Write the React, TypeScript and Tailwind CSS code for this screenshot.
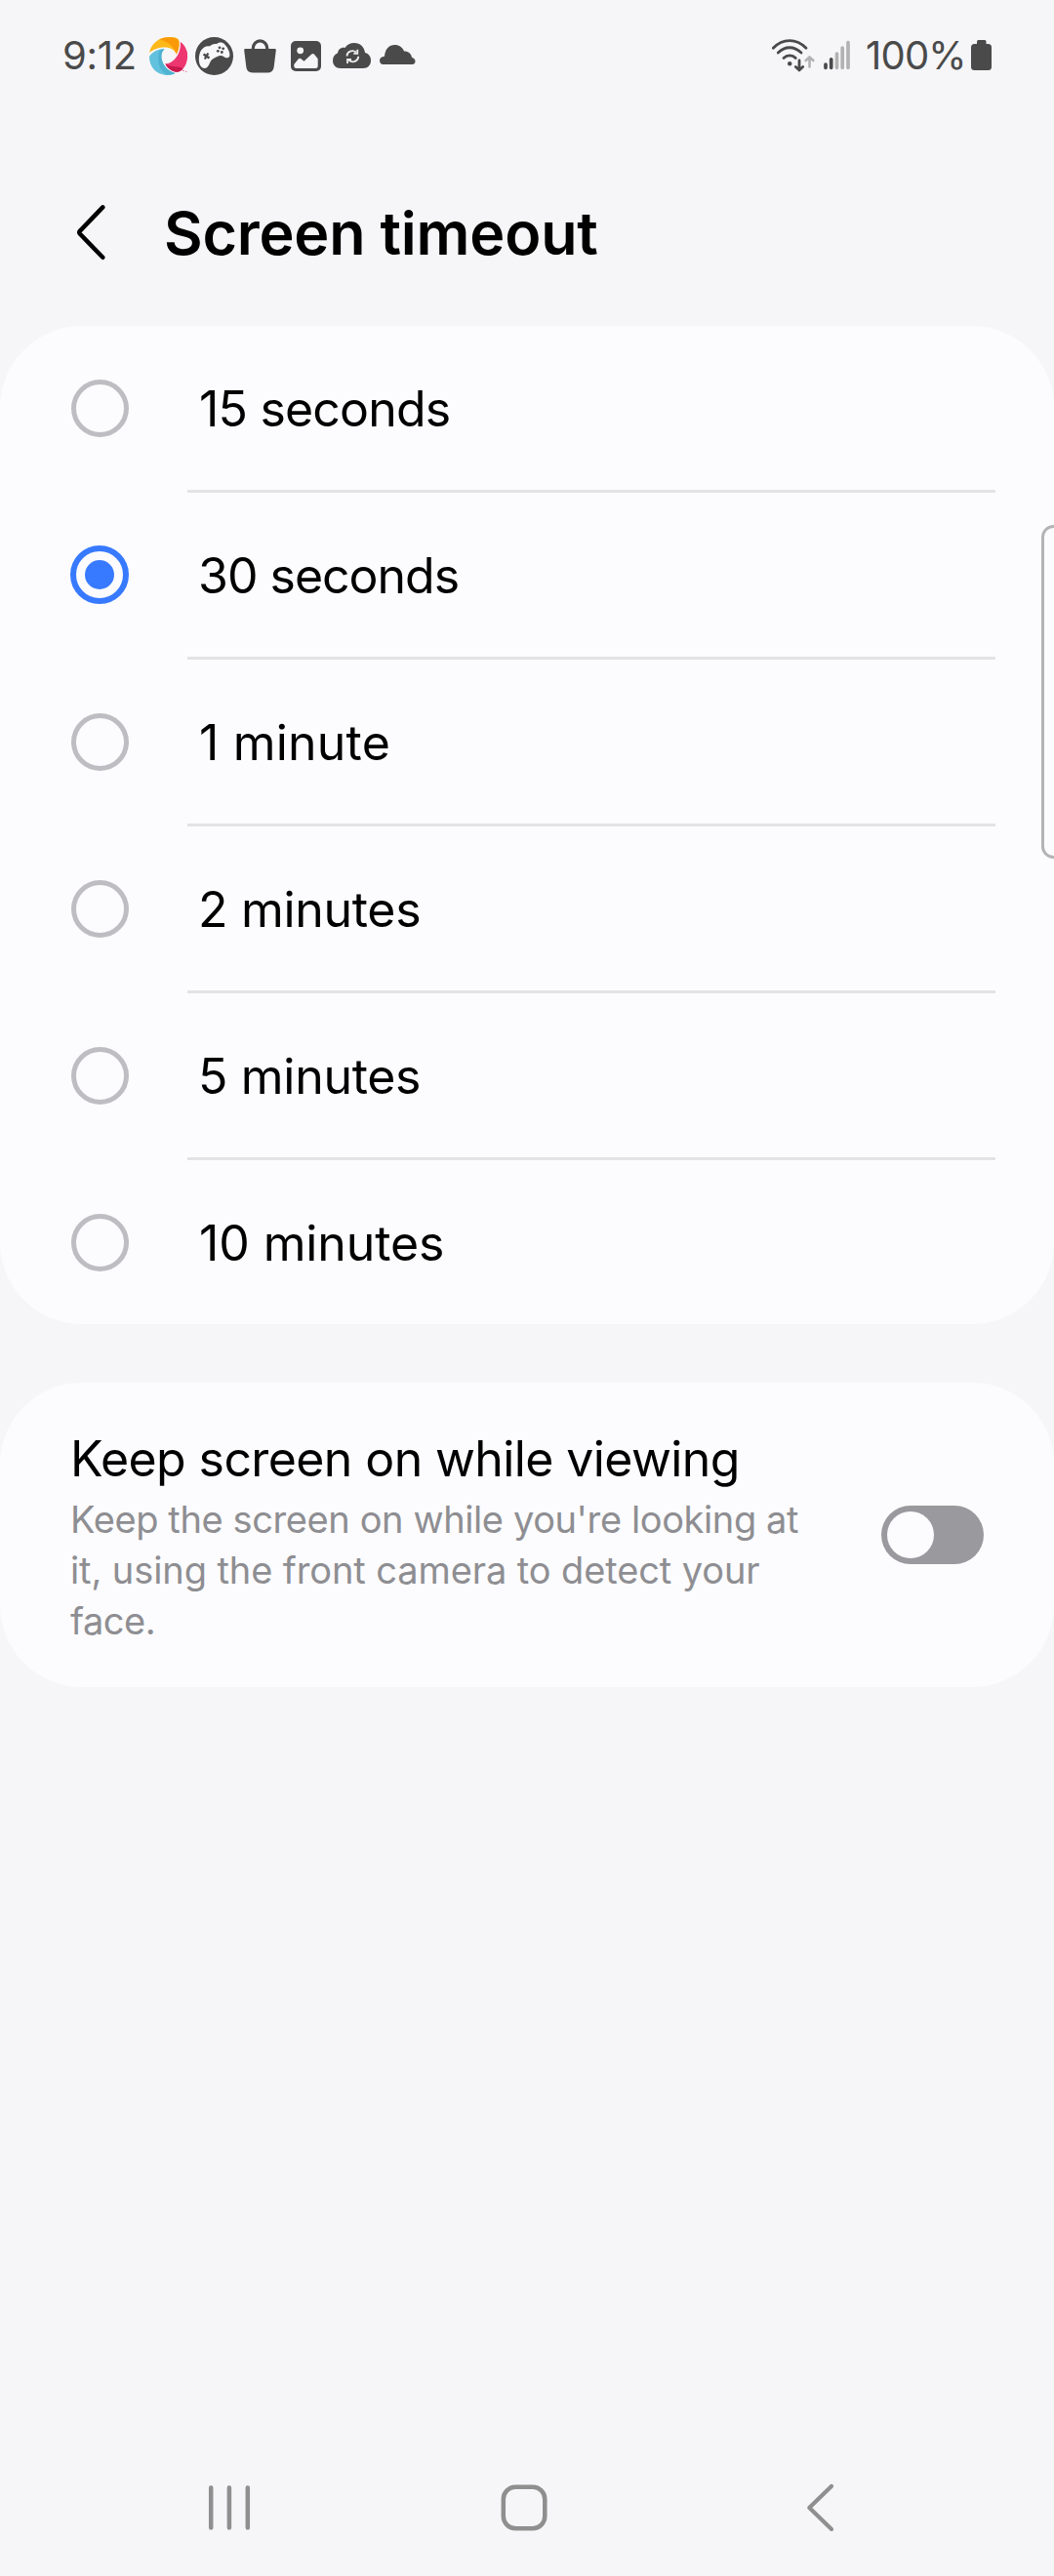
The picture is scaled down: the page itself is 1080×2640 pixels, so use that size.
import React, { useState } from "react";

const options = [
  { label: "15 seconds", spacing: "tracking-[-0.8px]" },
  { label: "30 seconds", spacing: "-ml-px tracking-[-1px]" },
  { label: "1 minute", spacing: "tracking-[0.2px]" },
  { label: "2 minutes", spacing: "-ml-px tracking-[-0.3px]" },
  { label: "5 minutes", spacing: "-ml-px tracking-[-0.3px]" },
  { label: "10 minutes", spacing: "tracking-[-0.1px]" },
];

function PinwheelIcon() {
  return (
    <svg className="h-10 w-[41px]" viewBox="152 37 41 40">
      <path d="M153 54C155 44 164 37.500 174 38C180 38 183 39.500 183.300 42C184 47 183 51.500 180.800 55.500C179 51 174 48.500 169 48.500C163 48.500 157 50.500 153 54Z" fill="#ffb819" />
      <path d="M163 40.500C172 42 178.500 48 180.800 55.500C183 51.500 184 47 183.300 42C182.500 38 170 36.500 163 40.500Z" fill="#fb9a08" />
      <path d="M184.800 43C190 46 192.500 53 192 59C191.500 66 188 72 183 73.500C177 74.500 171.500 70 169.500 65.500C178 65 186 55 184.800 43Z" fill="#ee3770" />
      <path d="M191.500 52C189 62 180 67.500 169.500 65.500C171.500 70 177 74.500 183 73.500C189 71.500 193 61 191.500 52Z" fill="#ee3770" />
      <path d="M169.500 65.500C176 69.500 184 67 187.500 70.500C185 73.500 181.500 74.200 179 73.200C175 71.800 171 69 169.500 65.500Z" fill="#c8194f" />
      <path d="M153 58C156 53 162 50 168.500 50.200C165.500 53 165 57 165.700 60.500C167 67 172 73 179.500 75C172 79 163 76.500 158 71.500C154.500 68 153 63 153 58Z" fill="#62c1dd" />
      <path d="M168.500 50.200C165.500 53 165 57 165.700 60.500C167 67 172 73 179.500 75C177 76.500 174 77 171 76.500C163 72 160 62 163.500 51C165 50.300 167 50.100 168.500 50.200Z" fill="#4fb2d1" />
      <path d="M187 72.500h2m1 1h1.500" stroke="#ee7b9f" strokeWidth="1" />
    </svg>
  );
}

function GamepadIcon() {
  return (
    <svg className="ml-1.5 h-10 w-[41px]" viewBox="199 37 41 40">
      <circle cx="219.500" cy="57.500" r="19.500" fill="#4a4a4a" />
      <path d="M208 49.500C210 47.500 212.500 47 214.500 47.500C217 45.500 220 44.800 222.500 44.800C224.500 43 228 43 230.300 45.500C233.500 49 236 54 235.300 57.200C234.500 60 231 59.800 228.500 57.500C226.500 56.500 224 57 221.500 58.500C218 60 216 61.500 215 64.500C213.500 69 210.500 71 207.500 69.500C204 67.500 203 61 204.500 55.500C205 53 206 51 208 49.500Z" fill="#f8f8fa" />
      <path d="M208.500 55.500L214.500 59.500M213.300 54.500L209.800 60.500" stroke="#4a4a4a" strokeWidth="2.300" />
      <g fill="#4a4a4a">
        <circle cx="225" cy="48.800" r="1.400" />
        <circle cx="228.700" cy="49.800" r="1.400" />
        <circle cx="223.300" cy="52.300" r="1.400" />
        <circle cx="227.300" cy="53.500" r="1.400" />
      </g>
    </svg>
  );
}

function BagIcon() {
  return (
    <svg className="ml-[9px] h-10 w-[35px]" viewBox="249 37 35 40">
      <path d="M259.300 52V49.500a7.200 7.700 0 0 1 14.400 0V52" fill="none" stroke="#4a4a4a" strokeWidth="3.200" />
      <path d="M251.500 50H281.500Q283 50 282.800 51.500L280.700 68.500Q280 74.500 274 74.500H259Q253 74.500 252.300 68.500L250.200 51.500Q250 50 251.500 50Z" fill="#4a4a4a" />
    </svg>
  );
}

function GalleryIcon() {
  return (
    <svg className="ml-[13px] h-10 w-[33px]" viewBox="297 37 33 40">
      <rect x="298" y="42" width="31" height="31" rx="5" fill="#4a4a4a" />
      <circle cx="307.700" cy="51.800" r="3.400" fill="#f6f6f8" />
      <path d="M301.300 66L305.500 60.800Q307 59 308.700 60.500L311.500 62.800L319 55.800Q320.800 54.300 322.300 56L325.700 60.200V67.500Q325.700 70 323.200 70H303.800Q301.300 70 301.300 67.500Z" fill="#f6f6f8" />
    </svg>
  );
}

function CloudSyncIcon() {
  return (
    <svg className="ml-2.5 h-10 w-[41px]" viewBox="340 37 41 40">
      <path d="M349 70C344 70 341 66.500 341 62C341 58 343 55.500 346 54.500C346.300 50.500 350 48 353.500 49C355.500 45.500 359 44 363 44C369 44 373.300 48 374 54C378 55 380 58 380 62C380 66.500 377 70 372 70Z" fill="#4a4a4a" />
      <path d="M355.500 57.500C355.500 53 361 50.500 365 53.500M366.300 50.800V54.800H362.300M367.300 57.800C367 63 361.500 64.800 357.500 61.800M356 65V61H360" fill="none" stroke="#ededef" strokeWidth="1.800" />
    </svg>
  );
}

function CloudIcon() {
  return (
    <svg className="ml-[7px] h-10 w-[39px]" viewBox="388 37 39 40">
      <path d="M392.500 66C390.500 66 389 64.500 389 62C389 59.500 391 58 394 57.800C394.500 50.500 398.500 46 404.500 46C409 46 412.500 48.500 414 52.500C418.500 52.500 421.500 55 422 59C424.300 59.500 425.500 61 425.500 63C425.500 65 424 66 422.500 66Z" fill="#4a4a4a" />
    </svg>
  );
}

function WifiIcon() {
  return (
    <svg className="h-10 w-[46px]" viewBox="790 37 46 40" fill="none" strokeLinecap="round">
      <g stroke="#4a4a4a" strokeWidth="2.800">
        <path d="M792.300 49.200C802 39 816 39 826 49.200" />
        <path d="M797.300 54C804.500 47 813.500 47 821 54" />
        <path d="M803 59.500C806.500 56 812 56 815.300 59.500" />
        <path d="M819 62V71.500M815.300 68.500L819 71.800L822.700 68.500" />
      </g>
      <circle cx="809.200" cy="65.300" r="2.200" fill="#4a4a4a" />
      <path d="M829.500 68.500V58.500M825.700 62L829.500 58.500L833.300 62" stroke="#b2b2b3" strokeWidth="2.600" />
    </svg>
  );
}

function SignalIcon() {
  return (
    <svg className="ml-[7px] h-10 w-[29px]" viewBox="843 37 29 40" strokeWidth="3.700" strokeLinecap="round">
      <path d="M846 66V69.300M851.700 60.800V69.300" stroke="#4a4a4a" />
      <path d="M857.500 55V69.300M863.200 49V69.300M869 43.700V69.300" stroke="#b2b2b3" />
    </svg>
  );
}

function BatteryIcon() {
  return (
    <svg className="h-10 w-[23px]" viewBox="994 37 23 40" fill="#4a4a4a">
      <rect x="1001" y="41" width="9.500" height="8" rx="1.500" />
      <rect x="995" y="45" width="21" height="27" rx="3.500" />
    </svg>
  );
}

function StatusBar() {
  return (
    <div className="flex h-[114px] items-center pr-[63px] pl-16 text-[40px] leading-10 text-[#4a4a4a]">
      <span className="w-[88px] whitespace-nowrap tracking-[-0.3px]">9:12</span>
      <PinwheelIcon />
      <GamepadIcon />
      <BagIcon />
      <GalleryIcon />
      <CloudSyncIcon />
      <CloudIcon />
      <div className="ml-auto flex items-center">
        <WifiIcon />
        <SignalIcon />
        <span className="ml-[15px] w-[107px] whitespace-nowrap tracking-[-0.8px]">100%</span>
        <BatteryIcon />
      </div>
    </div>
  );
}

function Radio({ checked }: { checked: boolean }) {
  return checked ? (
    <span className="flex size-[60px] items-center justify-center rounded-full border-[6px] border-[#387aff]">
      <span className="size-[30px] rounded-full bg-[#387aff]" />
    </span>
  ) : (
    <span className="size-[59px] rounded-full border-[5px] border-[#bebec2]" />
  );
}

export default function App() {
  const [selected, setSelected] = useState(1);
  const [keepOn, setKeepOn] = useState(false);

  return (
    <div className="relative flex h-[2640px] w-[1080px] flex-col overflow-hidden bg-[#f6f6f8] font-['Inter',sans-serif] text-black">
      <StatusBar />

      <header className="flex h-[220px] items-start pt-[88px] pl-[76px]">
        <svg className="mt-1.5 h-[60px] w-9" viewBox="76 208 36 60" fill="none" stroke="#000" strokeWidth="4.500" strokeLinecap="round" strokeLinejoin="round">
          <path d="M105.300 212.400L82 236.600Q80.600 238.200 82 239.800L105.300 263.800" />
        </svg>
        <h1 className="mt-px ml-14 text-[61px] leading-[72px] font-semibold tracking-[-0.2px] whitespace-nowrap">Screen timeout</h1>
      </header>

      <section className="flex flex-col rounded-[84px] bg-[#fcfcfe]">
        {options.map((option, i) => (
          <button key={option.label} type="button" onClick={() => setSelected(i)} className="group flex pr-[60px] pl-[72px] text-left">
            <span className="flex h-[168px] w-[60px] items-center justify-center">
              <Radio checked={selected === i} />
            </span>
            <span className="ml-[60px] flex h-[171px] flex-1 items-center border-b-[3px] border-[#e3e3e5] pl-3 text-[50px] leading-[60px] group-last:h-[168px] group-last:border-b-0">
              <span className={`pt-0.5 whitespace-nowrap ${option.spacing}`}>{option.label}</span>
            </span>
          </button>
        ))}
      </section>

      <section className="mt-[60px] flex h-[312px] items-center justify-between rounded-[84px] bg-[#fcfcfe] pr-[72px] pl-[72px]">
        <div className="h-full pt-12">
          <h2 className="text-[50px] leading-[60px] tracking-[-0.6px] whitespace-nowrap">Keep screen on while viewing</h2>
          <p className="mt-1.5 text-[38px] leading-[52px] whitespace-nowrap text-[#8e8e92]">
            <span className="block tracking-[-0.39px]">Keep the screen on while you're looking at</span>
            <span className="block tracking-[-0.1px]">it, using the front camera to detect your</span>
            <span className="block tracking-[-0.5px]">face.</span>
          </p>
        </div>
        <button
          type="button"
          role="switch"
          aria-checked={keepOn}
          aria-label="Keep screen on while viewing"
          onClick={() => setKeepOn(!keepOn)}
          className={`flex h-[60px] w-[105px] items-center rounded-full px-1.5 ${keepOn ? "justify-end bg-[#387aff]" : "justify-start bg-[#9a999e]"}`}
        >
          <span className="size-12 rounded-full bg-[#fcfcfe]" />
        </button>
      </section>

      {/* Edge panel handle, floating over the right side */}
      <div className="absolute top-[538px] -right-3 h-[342px] w-[25px] rounded-[14px] border-[3px] border-[#b4b4b6] bg-[#fcfcfe]" />

      <nav className="mt-auto flex h-[140px] items-center px-[211px]">
        <svg className="h-[50px] w-12" viewBox="211 2545 48 50" stroke="#8f8f8f" strokeWidth="4.500" strokeLinecap="round">
          <path d="M216.200 2549.500V2590.500M234.900 2549.500V2590.500M253.800 2549.500V2590.500" />
        </svg>
        <svg className="ml-[253px] h-[50px] w-[50px]" viewBox="512 2545 50 50" fill="none" stroke="#8f8f8f" strokeWidth="4.500">
          <rect x="515.800" y="2548.800" width="42.500" height="42.500" rx="12.500" />
        </svg>
        <svg className="ml-[262px] h-[50px] w-8" viewBox="824 2545 32 50" fill="none" stroke="#8f8f8f" strokeWidth="4.200" strokeLinecap="round" strokeLinejoin="round">
          <path d="M852 2548L829.300 2570L852 2592" />
        </svg>
      </nav>
    </div>
  );
}
